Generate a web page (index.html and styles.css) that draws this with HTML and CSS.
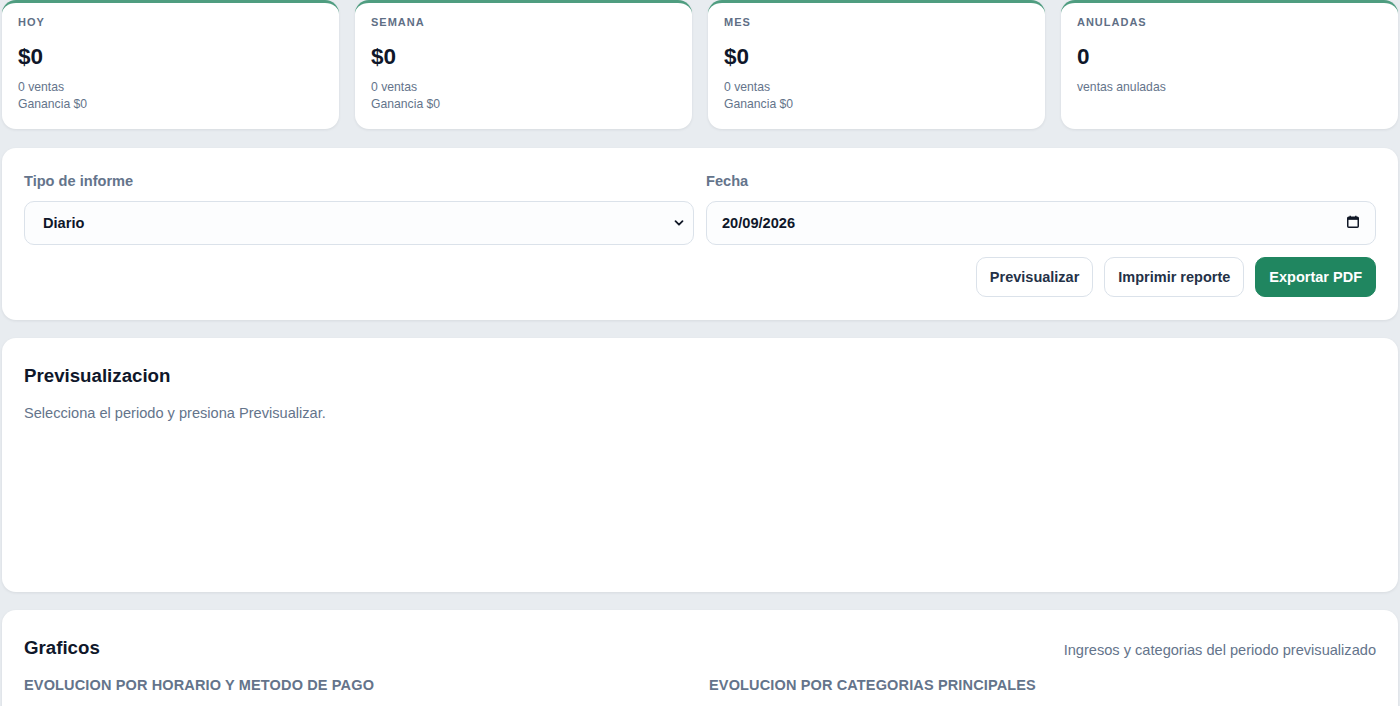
FILE: index.html
```html
<!DOCTYPE html>
<html lang="es">
<head>
<meta charset="utf-8">
<title>Reportes</title>
<link rel="stylesheet" href="styles.css">
</head>
<body>
<main class="page">
  <section class="stats">
    <div class="stat">
      <div class="stat-label">HOY</div>
      <div class="stat-value">$0</div>
      <div class="stat-sub">0 ventas</div>
      <div class="stat-sub">Ganancia $0</div>
    </div>
    <div class="stat">
      <div class="stat-label">SEMANA</div>
      <div class="stat-value">$0</div>
      <div class="stat-sub">0 ventas</div>
      <div class="stat-sub">Ganancia $0</div>
    </div>
    <div class="stat">
      <div class="stat-label">MES</div>
      <div class="stat-value">$0</div>
      <div class="stat-sub">0 ventas</div>
      <div class="stat-sub">Ganancia $0</div>
    </div>
    <div class="stat">
      <div class="stat-label">ANULADAS</div>
      <div class="stat-value">0</div>
      <div class="stat-sub">ventas anuladas</div>
    </div>
  </section>

  <section class="card filters">
    <div class="fields">
      <div class="field">
        <label class="field-label" for="tipo">Tipo de informe</label>
        <div class="control">
          <select id="tipo" class="select">
            <option>Diario</option>
            <option>Semanal</option>
            <option>Mensual</option>
          </select>
          <svg class="chevron" width="12" height="12" viewBox="0 0 12 12"><path d="M2.5 4.2 L6 7.7 L9.5 4.2" fill="none" stroke="#111827" stroke-width="1.8" stroke-linecap="round" stroke-linejoin="round"/></svg>
        </div>
      </div>
      <div class="field">
        <label class="field-label" for="fecha">Fecha</label>
        <div class="control date">
          <input id="fecha" class="date-input" type="text" value="20/09/2026">
          <svg class="cal" width="14" height="14" viewBox="0 0 14 14"><rect x="1.75" y="2.25" width="10.5" height="10" rx="1" fill="none" stroke="#111827" stroke-width="1.5"/><rect x="1.75" y="2.25" width="10.5" height="2.6" fill="#111827"/><path d="M4.2 0.8 V2.6 M9.8 0.8 V2.6" stroke="#111827" stroke-width="1.4"/></svg>
        </div>
      </div>
    </div>
    <div class="actions">
      <button class="btn">Previsualizar</button>
      <button class="btn">Imprimir reporte</button>
      <button class="btn btn-primary">Exportar PDF</button>
    </div>
  </section>

  <section class="card preview">
    <h2 class="card-title">Previsualizacion</h2>
    <p class="muted">Selecciona el periodo y presiona Previsualizar.</p>
  </section>

  <section class="card charts">
    <div class="charts-head">
      <h2 class="card-title">Graficos</h2>
      <span class="muted">Ingresos y categorias del periodo previsualizado</span>
    </div>
    <div class="chart-grid">
      <h3 class="chart-title">EVOLUCION POR HORARIO Y METODO DE PAGO</h3>
      <h3 class="chart-title">EVOLUCION POR CATEGORIAS PRINCIPALES</h3>
    </div>
  </section>
</main>
</body>
</html>
```

FILE: styles.css
```css
* { box-sizing: border-box; }

html, body {
  margin: 0;
  padding: 0;
  background: #e8ecf0;
  font-family: "Liberation Sans", Arial, Helvetica, sans-serif;
  color: #0f172a;
}

.page {
  padding: 0 2px 40px;
  display: flex;
  flex-direction: column;
  gap: 18px;
}

.stats {
  display: grid;
  grid-template-columns: repeat(4, 1fr);
  gap: 16px;
  margin-bottom: 1px;
}

.stat {
  background: #fff;
  border-top: 3px solid #4f9d80;
  border-radius: 14px;
  padding: 12px 16px 15px;
  box-shadow: 0 1px 3px rgba(15, 23, 42, 0.08);
  min-height: 129px;
}

.stat-label {
  font-size: 11px;
  line-height: 14px;
  font-weight: 700;
  letter-spacing: 0.09em;
  color: #5f6f86;
}

.stat-value {
  margin-top: 14px;
  font-size: 22.5px;
  line-height: 28px;
  font-weight: 700;
  color: #0f172a;
}

.stat-value + .stat-sub { margin-top: 8px; }

.stat-sub {
  font-size: 12.2px;
  line-height: 17px;
  color: #64748b;
}

.card {
  background: #fff;
  border-radius: 14px;
  box-shadow: 0 1px 3px rgba(15, 23, 42, 0.08);
  padding: 23px 22px 23px;
}

.fields {
  display: grid;
  grid-template-columns: 1fr 1fr;
  gap: 12px;
}

.field {
  display: flex;
  flex-direction: column;
  gap: 10px;
}

.field-label {
  font-size: 14.6px;
  line-height: 20px;
  font-weight: 700;
  color: #64748b;
}

.control {
  position: relative;
  height: 44px;
  border: 1px solid #dbe2ea;
  border-radius: 10px;
  background: #fcfdfe;
  display: flex;
  align-items: center;
}

.select {
  appearance: none;
  -webkit-appearance: none;
  border: none;
  background: transparent;
  width: 100%;
  height: 100%;
  padding: 0 34px 0 18px;
  font-family: inherit;
  font-size: 14.6px;
  font-weight: 700;
  color: #0f172a;
  outline: none;
}

.chevron {
  position: absolute;
  right: 8px;
  top: 15px;
  pointer-events: none;
}

.date {
  padding: 0 15px 0 0;
}

.date-input {
  flex: 1;
  border: none;
  background: transparent;
  height: 100%;
  padding: 0 0 0 15px;
  font-family: inherit;
  font-size: 14.6px;
  font-weight: 700;
  color: #0f172a;
  outline: none;
}

.cal { flex: none; margin-top: -2px; }

.actions {
  margin-top: 12px;
  display: flex;
  justify-content: flex-end;
  gap: 11px;
}

.btn {
  height: 40px;
  padding: 0 13px;
  border: 1px solid #dbe2ea;
  border-radius: 10px;
  background: #fff;
  font-family: inherit;
  font-size: 14.5px;
  font-weight: 700;
  color: #243147;
  cursor: pointer;
}

.btn-primary {
  background: #208660;
  border-color: #208660;
  color: #fff;
}

.preview {
  min-height: 254px;
  padding-top: 25px;
}

.card-title {
  margin: 0;
  font-size: 18.7px;
  line-height: 26px;
  font-weight: 700;
  color: #0f172a;
}

.muted {
  margin: 0;
  font-size: 14.6px;
  line-height: 20px;
  color: #64748b;
}

.preview .muted { margin-top: 14px; }

.charts { padding-top: 25px; padding-bottom: 30px; }

.charts-head {
  display: flex;
  align-items: center;
  justify-content: space-between;
}

.charts-head .muted { margin-top: 3px; }

.chart-grid {
  margin-top: 14px;
  display: grid;
  grid-template-columns: 1fr 1fr;
  gap: 18px;
}

.chart-title {
  margin: 0;
  font-size: 14.5px;
  line-height: 20px;
  font-weight: 700;
  color: #64748b;
  letter-spacing: 0.01em;
}
```
